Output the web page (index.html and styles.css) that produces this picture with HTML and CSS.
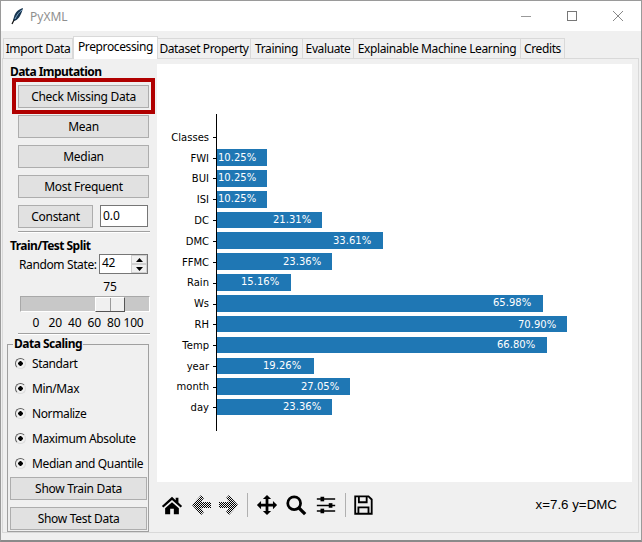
FILE: index.html
```html
<!DOCTYPE html>
<html lang="en">
<head>
  <meta charset="UTF-8">
  <meta name="viewport" content="width=device-width, initial-scale=1.0">
  <title>PyXML</title>
  <link rel="stylesheet" href="styles.css">
</head>
<body>

  <div class="window">
    <div class="titlebar">
      <svg class="app-icon" width="14" height="18" viewBox="0 0 14 18">
        <path d="M12 1C8 2 4 5 3 10L2 13L3 14C7 13 10 9 12 1Z" fill="#16344f"/>
        <path d="M11 3C8 5 6 8 4 12" stroke="#7fa6c8" stroke-width="1" fill="none"/>
        <path d="M3 13L1 17" stroke="#111" stroke-width="1.2"/>
      </svg>
      <span class="app-name">PyXML</span>
      <div class="win-buttons">
        <svg class="win-btn" width="46" height="30" viewBox="0 0 46 30"><path d="M18 15.5H28" stroke="#999"/></svg>
        <svg class="win-btn" width="46" height="30" viewBox="0 0 46 30"><rect x="18.5" y="10.5" width="9" height="9" fill="none" stroke="#777"/></svg>
        <svg class="win-btn" width="46" height="30" viewBox="0 0 46 30"><path d="M18 10L28 20M28 10L18 20" stroke="#888"/></svg>
      </div>
    </div>

    <div class="tabs">
      <div class="tab tab-first">Import Data</div>
      <div class="tab tab-active">Preprocessing</div>
      <div class="tab tab-dataset">Dataset Property</div>
      <div class="tab tab-training">Training</div>
      <div class="tab tab-evaluate">Evaluate</div>
      <div class="tab tab-explain">Explainable Machine Learning</div>
      <div class="tab tab-credits">Credits</div>
    </div>

    <div class="panel">
      <div class="sidebar">
        <div class="heading">Data Imputation</div>
        <div class="highlight"><button class="btn btn-wide">Check Missing Data</button></div>
        <button class="btn btn-wide btn-mean">Mean</button>
        <button class="btn btn-wide btn-next">Median</button>
        <button class="btn btn-wide btn-next">Most Frequent</button>
        <div class="constant-row">
          <button class="btn btn-constant">Constant</button>
          <div class="entry">0.0</div>
        </div>
        <div class="separator"></div>

        <div class="heading heading-split">Train/Test Split</div>
        <div class="random-row">
          <span>Random State:</span>
          <div class="spin">
            <span class="spin-value">42</span>
            <div class="spin-arrows">
              <div class="spin-arrow"><svg width="7" height="4" viewBox="0 0 7 4"><path d="M3.5 0L7 4H0Z" fill="#000"/></svg></div>
              <div class="spin-arrow"><svg width="7" height="4" viewBox="0 0 7 4"><path d="M0 0H7L3.5 4Z" fill="#000"/></svg></div>
            </div>
          </div>
        </div>
        <div class="scale-value">75</div>
        <div class="trough"><div class="thumb"></div></div>
        <div class="ticks">
          <span>0</span><span>20</span><span>40</span><span>60</span><span>80</span><span>100</span>
        </div>
        <div class="separator separator-low"></div>

        <fieldset class="group">
          <legend>Data Scaling</legend>
          <label class="radio-row"><span class="radio"></span>Standart</label>
          <label class="radio-row"><span class="radio"></span>Min/Max</label>
          <label class="radio-row"><span class="radio"></span>Normalize</label>
          <label class="radio-row"><span class="radio"></span>Maximum Absolute</label>
          <label class="radio-row"><span class="radio"></span>Median and Quantile</label>
          <button class="btn btn-group btn-train">Show Train Data</button>
          <button class="btn btn-group btn-test">Show Test Data</button>
        </fieldset>
      </div>

      <div class="main">
        <svg class="chart" width="475" height="418" viewBox="157 64 475 418">
          <g fill="#1f77b4">
            <rect x="216" y="149" width="51" height="17"/>
            <rect x="216" y="170" width="51" height="17"/>
            <rect x="216" y="191" width="51" height="17"/>
            <rect x="216" y="212" width="106" height="16"/>
            <rect x="216" y="232" width="167" height="17"/>
            <rect x="216" y="253" width="116" height="17"/>
            <rect x="216" y="274" width="75" height="17"/>
            <rect x="216" y="295" width="327" height="17"/>
            <rect x="216" y="316" width="351" height="16"/>
            <rect x="216" y="337" width="331" height="16"/>
            <rect x="216" y="358" width="98" height="16"/>
            <rect x="216" y="378" width="134" height="17"/>
            <rect x="216" y="399" width="116" height="16"/>
          </g>
          <path d="M216.5 114V431" stroke="#000"/>
          <path stroke="#000" d="M213 137.5h3M213 158.5h3M213 178.5h3M213 199.5h3M213 220.5h3M213 241.5h3M213 262.5h3M213 283.5h3M213 304.5h3M213 324.5h3M213 345.5h3M213 366.5h3M213 387.5h3M213 407.5h3"/>
          <g class="axis-labels" text-anchor="end">
            <text x="209" y="141">Classes</text>
            <text x="209" y="162">FWI</text>
            <text x="209" y="182">BUI</text>
            <text x="209" y="203">ISI</text>
            <text x="209" y="224">DC</text>
            <text x="209" y="245">DMC</text>
            <text x="209" y="266">FFMC</text>
            <text x="209" y="286">Rain</text>
            <text x="209" y="307">Ws</text>
            <text x="209" y="328">RH</text>
            <text x="209" y="349">Temp</text>
            <text x="209" y="370">year</text>
            <text x="209" y="390">month</text>
            <text x="209" y="411">day</text>
          </g>
          <g class="bar-labels">
            <text x="218" y="161">10.25%</text>
            <text x="218" y="181">10.25%</text>
            <text x="218" y="202">10.25%</text>
            <text x="273" y="223">21.31%</text>
            <text x="333" y="244">33.61%</text>
            <text x="283" y="265">23.36%</text>
            <text x="241" y="285">15.16%</text>
            <text x="493" y="306">65.98%</text>
            <text x="518" y="328">70.90%</text>
            <text x="497" y="348">66.80%</text>
            <text x="263" y="369">19.26%</text>
            <text x="301" y="390">27.05%</text>
            <text x="283" y="410">23.36%</text>
          </g>
        </svg>

        <div class="toolbar">
          <svg class="tool" width="22" height="22" viewBox="0 0 24 24">
            <path d="M12 3L1 13l1.6 1.8L12 6.6l9.4 8.2L23 13l-4-3.600V4h-3v2.700Z"/>
            <path d="M4.500 15.500L12 9l7.500 6.500V22H14v-6h-4v6H4.500Z"/>
          </svg>
          <svg class="tool tool-back" width="22" height="22" viewBox="0 0 22 22">
            <defs>
              <pattern id="dither" width="2" height="2" patternUnits="userSpaceOnUse">
                <rect width="1" height="1" fill="#000"/>
                <rect x="1" y="1" width="1" height="1" fill="#000"/>
              </pattern>
            </defs>
            <path d="M1 11L10 1l3 3-3 4h10v6H10l3 4-3 3Z" fill="url(#dither)"/>
          </svg>
          <svg class="tool tool-forward" width="22" height="22" viewBox="0 0 22 22">
            <path d="M21 11L12 1 9 4l3 4H2v6h10l-3 4 3 3Z" fill="url(#dither)"/>
          </svg>
          <div class="tool-sep tool-sep-first"></div>
          <svg class="tool tool-move" width="22" height="22" viewBox="0 0 24 24">
            <path d="M12 1l4.500 4.500h-3V10.500h5v-3L23 12l-4.500 4.500v-3h-5v5h3L12 23l-4.500-4.500h3v-5h-5v3L1 12l4.500-4.500v3h5V5.500h-3Z"/>
          </svg>
          <svg class="tool tool-zoom" width="22" height="22" viewBox="0 0 24 24">
            <circle cx="10" cy="10" r="7" fill="none" stroke="#000" stroke-width="3"/>
            <path d="M15 15l7 7" stroke="#000" stroke-width="3.500"/>
          </svg>
          <svg class="tool tool-sliders" width="22" height="22" viewBox="0 0 24 24">
            <path d="M2 5.500H22M2 12.500H22M2 18.500H22" stroke="#000" stroke-width="1.500"/>
            <rect x="6" y="3" width="4" height="5"/>
            <rect x="15" y="10" width="4" height="5"/>
            <rect x="6" y="16" width="4" height="5"/>
          </svg>
          <div class="tool-sep tool-sep-second"></div>
          <svg class="tool tool-save" width="22" height="22" viewBox="0 0 24 24">
            <path d="M3.500 2.500H18L21.500 6V21.500H3.500Z" fill="none" stroke="#000" stroke-width="2"/>
            <path d="M7.500 3V9H16V3" fill="none" stroke="#000" stroke-width="2"/>
            <path d="M7 21V14.500H18V21" fill="none" stroke="#000" stroke-width="2"/>
          </svg>
          <span class="coords">x=7.6 y=DMC</span>
        </div>
      </div>
    </div>
  </div>

</body>
</html>
```

FILE: styles.css
```css
html, body {
  margin: 0;
  padding: 0;
}

body {
  width: 642px;
  height: 542px;
  overflow: hidden;
  font-family: "Noto Sans", Arial, sans-serif;
  font-size: 12px;
  color: #000;
}

.window {
  box-sizing: border-box;
  width: 642px;
  height: 542px;
  background: #f0f0f0;
  border: 1px solid #9a9a9a;
  border-bottom: 2px solid #8a8a8a;
}

.titlebar {
  display: flex;
  align-items: center;
  height: 30px;
  background: #fff;
}

.app-icon {
  margin-left: 10px;
}

.app-name {
  margin-left: 5px;
  font-size: 12px;
  color: #8f8f8f;
}

.win-buttons {
  display: flex;
  margin-left: auto;
}

.win-btn {
  display: block;
}

.tabs {
  display: flex;
  align-items: flex-end;
  height: 28px;
  padding-left: 2px;
  position: relative;
  z-index: 1;
  margin-bottom: -1px;
}

.tab {
  box-sizing: border-box;
  height: 21px;
  line-height: 20px;
  text-align: center;
  white-space: nowrap;
  background: #f0f0f0;
  border: 1px solid #d9d9d9;
  border-left: 0;
  letter-spacing: -0.38px;
}

.tab-first {
  width: 70px;
  border-left: 1px solid #d9d9d9;
}

.tab-active {
  width: 85px;
  height: 23px;
  line-height: 20px;
  background: #fff;
  border: 1px solid #d9d9d9;
  border-bottom: 0;
}

.tab-dataset { width: 93px; }
.tab-training { width: 52px; }
.tab-evaluate { width: 51px; }
.tab-explain { width: 167px; }
.tab-credits { width: 44px; }

.panel {
  box-sizing: border-box;
  display: flex;
  width: 637px;
  height: 475px;
  margin-left: 1px;
  border: 1px solid #d9d9d9;
}

.sidebar {
  display: flex;
  flex-direction: column;
  flex: none;
  width: 154px;
  padding-top: 5px;
  box-sizing: border-box;
}

.heading {
  height: 14px;
  line-height: 16px;
  margin-left: 7px;
  font-weight: bold;
  letter-spacing: -0.55px;
}

.highlight {
  box-sizing: border-box;
  width: 143px;
  height: 36px;
  margin-left: 9px;
  padding: 3px 2px;
  border: 4px solid #b00000;
}

.btn {
  box-sizing: border-box;
  display: block;
  height: 23px;
  padding: 0;
  background: #e1e1e1;
  border: 1px solid #adadad;
  font-family: inherit;
  font-size: 12px;
  line-height: 21px;
  letter-spacing: -0.3px;
  color: #000;
}

.btn-wide {
  width: 131px;
}

.btn-mean {
  margin: 1px 0 0 15px;
}

.btn-next {
  margin: 7px 0 0 15px;
}

.constant-row {
  display: flex;
  margin: 7px 0 0 15px;
}

.btn-constant {
  width: 75px;
}

.entry {
  box-sizing: border-box;
  width: 48px;
  height: 22px;
  margin-left: 7px;
  padding-left: 2px;
  line-height: 19px;
  background: #fff;
  border: 1px solid #767676;
}

.separator {
  width: 132px;
  height: 0;
  margin: 3px 0 0 15px;
  border-top: 1px solid #a0a0a0;
  border-bottom: 1px solid #fff;
}

.heading-split {
  margin-top: 5px;
}

.random-row {
  display: flex;
  align-items: center;
  margin: 2px 0 0 16px;
  letter-spacing: -0.38px;
}

.spin {
  box-sizing: border-box;
  display: flex;
  width: 49px;
  height: 20px;
  margin-left: auto;
  margin-right: 9px;
  background: #fff;
  border: 1px solid #767676;
}

.spin-value {
  flex: 1;
  padding-left: 2px;
  line-height: 16px;
}

.spin-arrows {
  display: flex;
  flex-direction: column;
  width: 16px;
}

.spin-arrow {
  display: flex;
  flex: 1;
  align-items: center;
  justify-content: center;
  background: #f0f0f0;
  border: 1px solid #d0d0d0;
}

.spin-arrow svg {
  display: block;
}

.scale-value {
  margin: 4px 0 0 97px;
  width: 20px;
  height: 17px;
  line-height: 17px;
  text-align: center;
}

.trough {
  box-sizing: border-box;
  width: 130px;
  height: 16px;
  margin: 1px 0 0 17px;
  background: #c8c8c8;
  border-bottom: 1px solid #fff;
  border-right: 1px solid #fff;
  border-top: 1px solid #a8a8a8;
  border-left: 1px solid #a8a8a8;
}

.thumb {
  box-sizing: border-box;
  width: 30px;
  height: 15px;
  margin-left: 74px;
  background: linear-gradient(#9a9a9a, #9a9a9a) no-repeat 14px 0 / 1px 100% #f0f0f0;
  border: 1px solid #fff;
  border-right: 1px solid #555;
  border-bottom: 1px solid #555;
}

.ticks {
  display: grid;
  grid-template-columns: repeat(6, 19.5px);
  margin: 2px 0 0 23px;
  height: 17px;
  line-height: 17px;
  letter-spacing: -0.2px;
}

.ticks span {
  text-align: center;
}

.separator-low {
  margin-top: 2px;
}

.group {
  box-sizing: border-box;
  width: 142px;
  height: 197px;
  margin: 2px 0 0 4px;
  padding: 0;
  min-inline-size: 0;
  border: 1px solid #a0a0a0;
}

.group legend {
  margin-left: 5px;
  padding: 0 1px;
  height: 14px;
  line-height: 14px;
  font-weight: bold;
  letter-spacing: -0.5px;
}

.radio-row {
  display: flex;
  align-items: center;
  height: 25px;
  margin-left: 7px;
  white-space: nowrap;
  letter-spacing: -0.38px;
}

.radio {
  box-sizing: border-box;
  width: 11px;
  height: 11px;
  margin-right: 6px;
  border-radius: 50%;
  border: 1px solid;
  border-color: #606060 #dcdcdc #dcdcdc #606060;
  background: radial-gradient(circle, #000 2px, #f0f0f0 2.5px);
}

.btn-group {
  width: 137px;
  margin-left: 2px;
}

.btn-train {
  margin-top: 1px;
}

.btn-test {
  margin-top: 7px;
}

.main {
  display: flex;
  flex-direction: column;
  flex: none;
  width: 475px;
  padding-top: 5px;
}

.chart {
  display: block;
  background: #fff;
}

.axis-labels {
  font-family: "DejaVu Sans", sans-serif;
  font-size: 10px;
  fill: #000;
}

.bar-labels {
  font-family: "DejaVu Sans", sans-serif;
  font-size: 10px;
  fill: #fff;
}

.toolbar {
  display: flex;
  align-items: center;
  height: 45px;
  padding-left: 4px;
}

.tool {
  display: block;
  flex: none;
}

.tool-back { margin-left: 8px; }
.tool-forward { margin-left: 4px; }
.tool-move { margin-left: 8px; }
.tool-zoom { margin-left: 7px; }
.tool-sliders { margin-left: 8px; }
.tool-save { margin-left: 6px; }

.tool-sep {
  flex: none;
  width: 1px;
  height: 24px;
  background: #b0b0b0;
}

.tool-sep-first,
.tool-sep-second {
  margin-left: 8px;
}

.coords {
  margin-left: auto;
  margin-right: 15px;
  font-family: "Liberation Sans", Arial, sans-serif;
  font-size: 13.33px;
}
```
